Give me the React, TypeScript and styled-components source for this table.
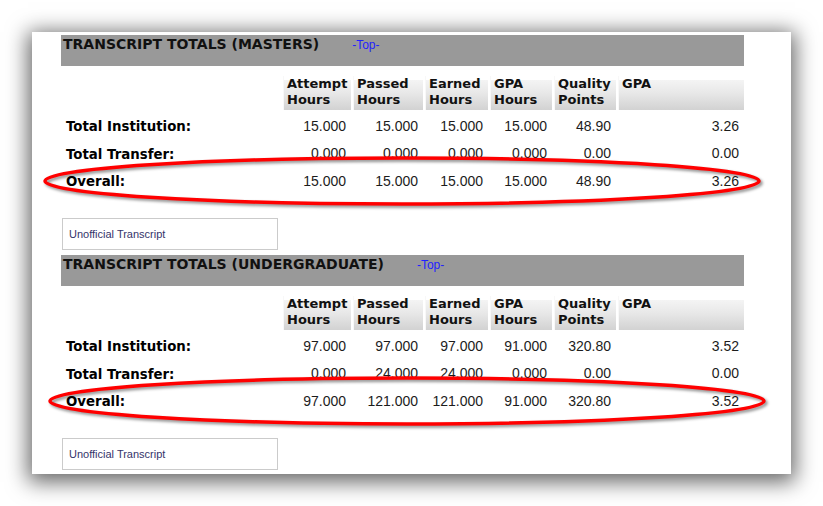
import React from "react";
import styled, { createGlobalStyle } from "styled-components";

const GlobalStyle = createGlobalStyle`
  html, body {
    margin: 0;
    padding: 0;
    background: #ffffff;
  }
  body {
    font-family: "DejaVu Sans", Verdana, sans-serif;
  }
`;

const Page = styled.div`
  width: 823px;
  height: 506px;
  box-sizing: border-box;
  padding: 32px 32px 0 32px;
  overflow: hidden;
`;

const Card = styled.div`
  width: 759px;
  box-sizing: border-box;
  background: #ffffff;
  padding: 3px 0 4px 29px;
  box-shadow: 0 4px 20px 4px rgba(0, 0, 0, 0.6);
  display: flex;
  flex-direction: column;
  gap: 5px;
`;

const Section = styled.section`
  position: relative;
  width: 683px;
  display: flex;
  flex-direction: column;
`;

const TitleBar = styled.div`
  height: 31px;
  box-sizing: border-box;
  background: #999999;
  padding: 1px 0 0 2px;
  display: flex;
  align-items: baseline;
  gap: 33px;
`;

const Title = styled.h2`
  margin: 0;
  font-family: "DejaVu Sans", Verdana, sans-serif;
  font-weight: bold;
  font-size: 14px;
  line-height: 17px;
  color: #111111;
`;

const TopLink = styled.a`
  font-family: "Liberation Sans", Arial, sans-serif;
  font-size: 12px;
  color: #1f1fff;
  text-decoration: none;
`;

const cols = "220px 68px 70px 63px 62px 62px 1fr";

const HeaderRow = styled.div`
  margin-top: 10px;
  display: grid;
  grid-template-columns: ${cols};
  column-gap: 2px;
  height: 34px;
  margin-bottom: 2px;
`;

const HeadCell = styled.div<{ $blank?: boolean }>`
  box-sizing: border-box;
  padding: 0 0 0 3px;
  font-family: "DejaVu Sans", Verdana, sans-serif;
  font-weight: bold;
  font-size: 13px;
  line-height: 16px;
  color: #111111;
  background: ${(p) =>
    p.$blank
      ? "transparent"
      : "linear-gradient(to bottom, #ffffff 0, #ffffff 4px, #f4f4f4 4px, #e8e8e8 50%, #d2d2d2 100%)"};
  border-left: ${(p) => (p.$blank ? "none" : "1px solid #f8f8f8")};
`;

const DataRow = styled.div`
  display: grid;
  grid-template-columns: ${cols};
  column-gap: 2px;
  height: 27.5px;
  align-items: center;
`;

const Label = styled.div`
  padding: 2px 0 0 5px;
  font-family: "DejaVu Sans", Verdana, sans-serif;
  font-weight: bold;
  font-size: 13.33px;
  color: #000000;
  white-space: nowrap;
`;

const Num = styled.div`
  padding-right: 5px;
  text-align: right;
  font-family: "Liberation Sans", Arial, sans-serif;
  font-size: 14px;
  color: #1c1c1c;
`;

const LinkBox = styled.div`
  margin-top: 23.5px;
  margin-left: 1px;
  width: 216px;
  height: 32px;
  box-sizing: border-box;
  border: 1px solid #cbcbcb;
  padding-left: 6px;
  display: flex;
  align-items: center;
  font-family: "Liberation Sans", Arial, sans-serif;
  font-size: 11px;
  color: #34346a;
`;

const Annotation = styled.svg`
  position: absolute;
  left: -20px;
  pointer-events: none;
  overflow: visible;
  filter: drop-shadow(2px 2px 1.5px rgba(0, 0, 0, 0.45));
`;

type Row = { label: string; values: string[] };

type SectionData = {
  title: string;
  rows: Row[];
  ellipse: { top: number; cx: number; rx: number; ry: number };
};

const headers = [
  ["Attempt", "Hours"],
  ["Passed", "Hours"],
  ["Earned", "Hours"],
  ["GPA", "Hours"],
  ["Quality", "Points"],
  ["GPA", ""],
];

const sections: SectionData[] = [
  {
    title: "TRANSCRIPT TOTALS (MASTERS)",
    rows: [
      { label: "Total Institution:", values: ["15.000", "15.000", "15.000", "15.000", "48.90", "3.26"] },
      { label: "Total Transfer:", values: ["0.000", "0.000", "0.000", "0.000", "0.00", "0.00"] },
      { label: "Overall:", values: ["15.000", "15.000", "15.000", "15.000", "48.90", "3.26"] },
    ],
    ellipse: { top: 116, cx: 361, rx: 357, ry: 23 },
  },
  {
    title: "TRANSCRIPT TOTALS (UNDERGRADUATE)",
    rows: [
      { label: "Total Institution:", values: ["97.000", "97.000", "97.000", "91.000", "320.80", "3.52"] },
      { label: "Total Transfer:", values: ["0.000", "24.000", "24.000", "0.000", "0.00", "0.00"] },
      { label: "Overall:", values: ["97.000", "121.000", "121.000", "91.000", "320.80", "3.52"] },
    ],
    ellipse: { top: 116, cx: 366, rx: 357, ry: 23 },
  },
];

function TotalsSection({ data }: { data: SectionData }) {
  const { ellipse } = data;
  return (
    <Section>
      <TitleBar>
        <Title>{data.title}</Title>
        <TopLink href="#">-Top-</TopLink>
      </TitleBar>
      <HeaderRow>
        <HeadCell $blank />
        {headers.map((h, i) => (
          <HeadCell key={i}>
            {h[0]}
            <br />
            {h[1]}
          </HeadCell>
        ))}
      </HeaderRow>
      {data.rows.map((r) => (
        <DataRow key={r.label}>
          <Label>{r.label}</Label>
          {r.values.map((v, i) => (
            <Num key={i}>{v}</Num>
          ))}
        </DataRow>
      ))}
      <LinkBox>Unofficial Transcript</LinkBox>
      <Annotation
        width={740}
        height={60}
        viewBox="0 0 740 60"
        style={{ top: ellipse.top }}
      >
        <ellipse
          cx={ellipse.cx}
          cy={30}
          rx={ellipse.rx}
          ry={ellipse.ry}
          fill="none"
          stroke="#ff0000"
          strokeWidth={3.5}
        />
      </Annotation>
    </Section>
  );
}

export default function App() {
  return (
    <>
      <GlobalStyle />
      <Page>
        <Card>
          {sections.map((s) => (
            <TotalsSection key={s.title} data={s} />
          ))}
        </Card>
      </Page>
    </>
  );
}
